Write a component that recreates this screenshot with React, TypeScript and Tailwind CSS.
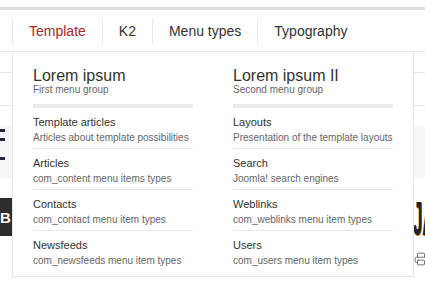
import React from "react";
import { Printer } from "lucide-react";

type Item = { title: string; desc: string };

const col1: Item[] = [
  { title: "Template articles", desc: "Articles about template possibilities" },
  { title: "Articles", desc: "com_content menu items types" },
  { title: "Contacts", desc: "com_contact menu item types" },
  { title: "Newsfeeds", desc: "com_newsfeeds menu item types" },
];

const col2: Item[] = [
  { title: "Layouts", desc: "Presentation of the template layouts" },
  { title: "Search", desc: "Joomla! search engines" },
  { title: "Weblinks", desc: "com_weblinks menu item types" },
  { title: "Users", desc: "com_users menu item types" },
];

function Column({ heading, sub, items }: { heading: string; sub: string; items: Item[] }) {
  return (
    <div className="w-[160px]">
      <div className="text-[16px] leading-[16px] text-[#333]">{heading}</div>
      <div className="text-[10px] leading-[12px] text-[#666]">{sub}</div>
      <div className="mt-[8px] h-[4px] bg-[#ececec]" />
      <ul>
        {items.map((it) => (
          <li key={it.title} className="border-b border-[#e8e8e8] pt-[6px] pb-[2px] last:border-b-0">
            <div className="text-[11px] leading-[16px] text-[#333]">{it.title}</div>
            <div className="text-[10px] leading-[16px] text-[#666]">{it.desc}</div>
          </li>
        ))}
      </ul>
    </div>
  );
}

export default function App() {
  const nav = ["Template", "K2", "Menu types", "Typography"];
  return (
    <div className="relative h-[293px] w-[425px] overflow-hidden bg-white font-['Liberation_Sans',Arial,sans-serif]">
      <div className="h-[7px]" />
      <div className="h-[3px] bg-[#dddddd]" />
      <header className="h-[42px] border-b border-[#e6e6e6] pt-[9px]">
        <nav className="flex h-[25px] pl-[12px]">
          {nav.map((n, i) => (
            <div
              key={n}
              className={
                i === 0
                  ? "border-l border-[#e8e8e8] px-4 text-[14px] leading-[25px] text-[#a62a25]"
                  : "border-l border-[#e8e8e8] px-4 text-[14px] leading-[25px] text-[#333]"
              }
            >
              {n}
            </div>
          ))}
        </nav>
      </header>

      {/* page content behind the dropdown */}
      <div className="h-[21px] border-b border-[#e6e6e6]" />
      <div className="h-[33px] border-b border-[#e6e6e6]" />
      <div className="h-[20px]" />
      <div className="flex h-[52px] flex-col bg-[#f6f6f6] pt-[3px]">
        <div className="h-[3px] w-[5px] bg-[#1e2a3a]" />
        <div className="mt-[6px] h-[3px] w-[5px] bg-[#1e2a3a]" />
        <div className="mt-[16px] h-[3px] w-[5px] bg-[#1e2a3a]" />
      </div>
      <div className="h-[20px]" />
      <div className="flex h-[40px] items-start justify-between">
        <div className="flex h-[38px] w-[60px] items-center bg-[#2d2d2d] text-[15px] font-bold leading-none text-white">
          B
        </div>
        <div className="-mt-[3px] w-[12px] overflow-hidden">
          <span className="inline-block origin-left scale-x-[0.35] whitespace-nowrap text-[48px] font-bold leading-[48px] text-[#222] [text-shadow:2px_1px_0_#c0641e]">
            JA
          </span>
        </div>
      </div>
      <div className="flex justify-end pt-[14px]">
        <div className="w-[11px] overflow-hidden">
          <Printer size={14} strokeWidth={1.5} className="text-[#666]" />
        </div>
      </div>

      {/* dropdown */}
      <div className="absolute left-[12px] top-[51px] flex w-[402px] gap-[40px] border border-[#e6e6e6] bg-white px-[20px] pb-[5px] pt-[16px]">
        <Column heading="Lorem ipsum" sub="First menu group" items={col1} />
        <Column heading="Lorem ipsum II" sub="Second menu group" items={col2} />
      </div>
    </div>
  );
}
